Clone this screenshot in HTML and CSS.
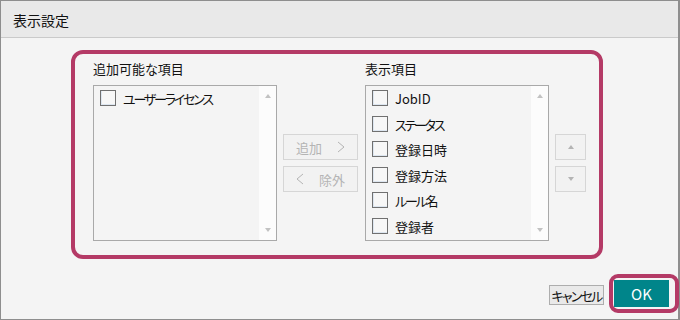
FILE: index.html
```html
<!DOCTYPE html>
<html>

<head>
    <title>表示設定</title>
    <meta charset="UTF-8">
    <meta name="viewport" content="width=device-width, initial-scale=1.0">
    <link rel="stylesheet" href="styles.css">
</head>

<body>
    <div class="window">
        <div class="titlebar">表示設定</div>

        <div class="content">
            <div class="panel">
                <div class="label">追加可能な項目</div>
                <div></div>
                <div class="label">表示項目</div>
                <div></div>

                <div class="list">
                    <div class="items">
                        <div class="item"><span class="check"></span><span class="kana">ユーザーライセンス</span></div>
                    </div>
                    <div class="scrollbar">
                        <span class="arrow-up"></span>
                        <span class="arrow-down"></span>
                    </div>
                </div>

                <div class="move-buttons">
                    <button class="btn-move" disabled>
                        追加
                        <svg width="8" height="12" viewBox="0 0 8 12"><polyline points="1,1 7,6 1,11" fill="none" stroke="#b4b4b4" stroke-width="1"/></svg>
                    </button>
                    <button class="btn-move" disabled>
                        <svg width="8" height="12" viewBox="0 0 8 12"><polyline points="7,1 1,6 7,11" fill="none" stroke="#b4b4b4" stroke-width="1"/></svg>
                        除外
                    </button>
                </div>

                <div class="list">
                    <div class="items">
                        <div class="item"><span class="check"></span><span>JobID</span></div>
                        <div class="item"><span class="check"></span><span class="kana">ステータス</span></div>
                        <div class="item"><span class="check"></span><span>登録日時</span></div>
                        <div class="item"><span class="check"></span><span>登録方法</span></div>
                        <div class="item"><span class="check"></span><span><span class="kana">ルール</span>名</span></div>
                        <div class="item"><span class="check"></span><span>登録者</span></div>
                    </div>
                    <div class="scrollbar">
                        <span class="arrow-up"></span>
                        <span class="arrow-down"></span>
                    </div>
                </div>

                <div class="order-buttons">
                    <button class="btn-order" disabled><span class="tri-up"></span></button>
                    <button class="btn-order" disabled><span class="tri-down"></span></button>
                </div>
            </div>
        </div>

        <div class="footer">
            <button class="btn-cancel">キャンセル</button>
            <button class="btn-ok">OK</button>
        </div>
    </div>
</body>

</html>
```

FILE: styles.css
```css
* {
    box-sizing: border-box;
}

body {
    margin: 0;
    font-family: "Noto Sans CJK JP", "Liberation Sans", sans-serif;
    font-feature-settings: "palt";
    color: #111;
}

.window {
    width: 680px;
    height: 320px;
    background-color: #f4f4f4;
    border: 1px solid #8e8e8e;
    border-right-width: 2px;
    position: relative;
}

.titlebar {
    height: 37px;
    line-height: 38px;
    padding-left: 12px;
    font-size: 14px;
    background-color: #e9e9e9;
    border-bottom: 1px solid #cacaca;
}

.content {
    padding: 12px 0 0 70px;
}

.panel {
    width: 532px;
    height: 209px;
    border: 4px solid #b43a66;
    border-radius: 12px;
    padding: 7px 13px 14px 18px;
    display: grid;
    grid-template-columns: 184px 76px 184px 31px;
    grid-template-rows: 24px 156px;
    column-gap: 6px;
}

.label {
    font-size: 13px;
    line-height: 16px;
}

.list {
    display: flex;
    border: 1px solid #a9a9a9;
    background-color: #f4f4f4;
}

.items {
    flex: 1;
    padding: 4px 0 0 6px;
}

.item {
    height: 25.6px;
    display: flex;
    align-items: flex-start;
    gap: 7px;
    font-size: 13px;
    line-height: 17px;
}

/* katakana is much narrower in the original UI font */
.kana {
    letter-spacing: -2.2px;
}

.check {
    width: 16px;
    height: 16px;
    border: 1px solid #707070;
    background-color: #f7f7f7;
    box-shadow: inset 1px -1px 0 #dde6f0;
}

.scrollbar {
    width: 17px;
    background-color: #fcfcfc;
    display: flex;
    flex-direction: column;
    justify-content: space-between;
    align-items: center;
    padding: 8px 0 8px;
}

.arrow-up,
.tri-up {
    width: 0;
    height: 0;
    border-left: 3.5px solid transparent;
    border-right: 3.5px solid transparent;
    border-bottom: 4px solid #c2c2c2;
}

.arrow-down,
.tri-down {
    width: 0;
    height: 0;
    border-left: 3.5px solid transparent;
    border-right: 3.5px solid transparent;
    border-top: 4px solid #c2c2c2;
}

.move-buttons,
.order-buttons {
    display: flex;
    flex-direction: column;
    justify-content: center;
    gap: 6px;
}

.btn-move,
.btn-order {
    height: 26px;
    border: 1px solid #d6d6d6;
    background-color: #f2f2f2;
    font-family: inherit;
    font-feature-settings: "palt";
    padding: 0;
    display: flex;
    align-items: center;
    justify-content: center;
}

.btn-move {
    width: 75px;
    gap: 15px;
    font-size: 13px;
    color: #b4b4b4;
}

.btn-order {
    width: 31px;
}

.tri-up,
.tri-down {
    border-bottom-color: #b4b4b4;
    border-top-color: #b4b4b4;
}

.footer {
    display: flex;
    justify-content: flex-end;
    align-items: flex-end;
    gap: 10px;
    margin-top: 21px;
    padding-right: 9px;
}

.btn-cancel {
    width: 55px;
    height: 20px;
    margin-bottom: 2px;
    padding: 0;
    border: 1px solid #adadad;
    background-color: #e9e9e9;
    font-family: inherit;
    font-feature-settings: "palt";
    font-size: 13px;
    color: #111;
    white-space: nowrap;
    letter-spacing: -1.8px;
}

.btn-ok {
    width: 55px;
    height: 27px;
    padding: 0;
    border: none;
    background-color: #00858a;
    color: #fff;
    font-family: inherit;
    font-size: 15px;
    font-weight: 400;
    position: relative;
}

.btn-ok::after {
    content: "";
    position: absolute;
    left: -5px;
    top: -6px;
    right: -10px;
    bottom: -6px;
    border: 4px solid #b43a66;
    border-radius: 9px;
}
```
